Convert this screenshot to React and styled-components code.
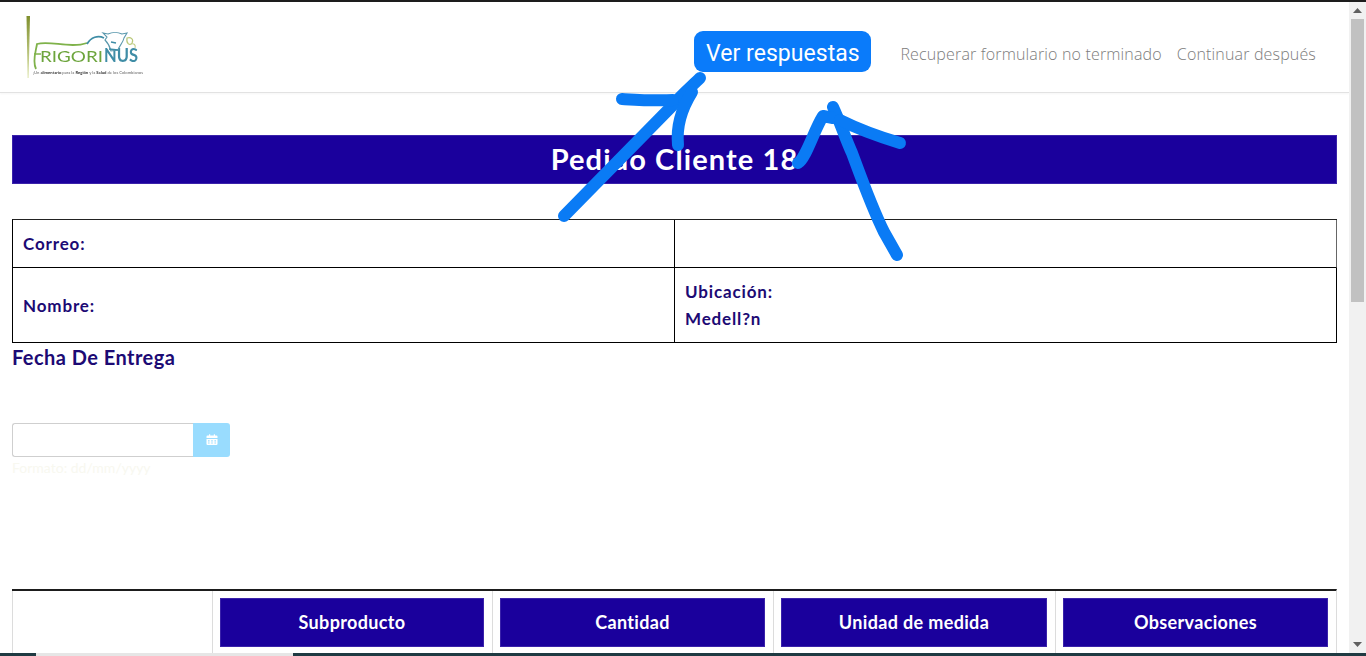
import React from "react";
import styled, { createGlobalStyle } from "styled-components";

const Global = createGlobalStyle`
  html, body { margin: 0; padding: 0; height: 100%; overflow: hidden; background: #fff; }
  * { box-sizing: border-box; }
`;

const Frame = styled.div`
  position: relative;
  width: 1366px;
  height: 656px;
  display: flex;
  flex-direction: column;
  overflow: hidden;
  background: #fff;
  font-family: "Lato", "Open Sans", sans-serif;
`;
const TopEdge = styled.div`
  height: 2px;
  flex: none;
  background: #1d1d1d;
`;
const Middle = styled.div`
  flex: 1;
  min-height: 0;
  display: flex;
`;
const Page = styled.main`
  flex: 1;
  min-width: 0;
  overflow: hidden;
`;
const Header = styled.header`
  height: 91px;
  display: flex;
  align-items: center;
  padding: 0 33px 0 26px;
  border-bottom: 1px solid #e2e2e2;
  box-shadow: 0 1px 2px rgba(0, 0, 0, 0.04);
`;
const LogoBox = styled.div`
  width: 120px;
  height: 64px;
  margin-top: 2px;
`;
const Nav = styled.nav`
  margin-left: auto;
  margin-top: 8px;
  display: flex;
  align-items: center;
  gap: 15px;
`;
const PrimaryLink = styled.a`
  display: flex;
  align-items: center;
  justify-content: center;
  width: 177px;
  height: 41px;
  padding-top: 4px;
  margin-right: 14px;
  background: #0a7bfa;
  border-radius: 9px;
  color: #fff;
  font: 400 23px/1 "Roboto", sans-serif;
  letter-spacing: 0.05px;
`;
const NavLink = styled.a`
  padding-top: 6px;
  color: #7c7c7c;
  font: 300 16px/1 "Open Sans", sans-serif;
  letter-spacing: 0.16px;
`;
const Content = styled.div`
  padding: 42px 12px 0;
`;
const TitleBar = styled.h1`
  margin: 0;
  height: 49px;
  padding-bottom: 2px;
  display: flex;
  align-items: center;
  justify-content: center;
  background: #1a009c;
  border: 1px solid #3a22aa;
  color: #fff;
  font-size: 29px;
  font-weight: 700;
  letter-spacing: 1.1px;
`;
const InfoTable = styled.div`
  margin-top: 35px;
  display: grid;
  grid-template-columns: 1fr 1fr;
  grid-template-rows: 48px 75px;
  border-top: 1px solid #222;
  border-left: 1px solid #000;
`;
const InfoCell = styled.div`
  display: flex;
  flex-direction: column;
  justify-content: center;
  padding: 0 10px;
  border-right: 1px solid ${(p) => (p.$muted ? "#666" : "#000")};
  border-bottom: 1px solid #000;
  color: #1c0a74;
  font-size: 17px;
  font-weight: 700;
  line-height: 27px;
  letter-spacing: 0.85px;
`;
const SectionLabel = styled.h2`
  margin: 0 0 52px;
  height: 28px;
  display: flex;
  align-items: center;
  color: #1c0a74;
  font-size: 20px;
  font-weight: 700;
  letter-spacing: 0.45px;
`;
const DateGroup = styled.div`
  width: 218px;
  height: 34px;
  display: flex;
`;
const DateInput = styled.input`
  flex: 1;
  min-width: 0;
  border: 1px solid #cfcfcf;
  border-right: none;
  border-radius: 3px 0 0 3px;
  background: #fff;
`;
const DateAddon = styled.div`
  width: 37px;
  display: flex;
  align-items: center;
  justify-content: center;
  background: #99dcfe;
  border-radius: 0 3px 3px 0;
`;
const Hint = styled.div`
  height: 18px;
  margin-top: 2px;
  color: #f8f8f0;
  font-size: 14px;
  line-height: 18px;
`;
const ProductGrid = styled.div`
  margin-top: 112px;
  display: grid;
  grid-template-columns: 200px 280px 281px 282px 281px;
  border-top: 2px solid #1d1d1d;
  border-right: 1px solid #dcdcdc;
`;
const GridCell = styled.div`
  height: 64px;
  padding: 7px 8px 0 7px;
  border-left: 1px solid #dcdcdc;
`;
const ColumnHead = styled.div`
  height: 49px;
  padding-bottom: 1px;
  display: flex;
  align-items: center;
  justify-content: center;
  background: #1a009c;
  border: 1px solid #3a22aa;
  color: #fff;
  font-size: 18px;
  font-weight: 700;
  letter-spacing: 0.35px;
`;
const Scrollbar = styled.div`
  width: 17px;
  flex: none;
  display: flex;
  flex-direction: column;
  background: #f1f1f1;
`;
const ScrollButton = styled.div`
  height: 17px;
  flex: none;
  display: flex;
  align-items: center;
  justify-content: center;
  color: #606060;
`;
const ScrollTrack = styled.div`
  flex: 1;
  padding: 0 2px;
`;
const ScrollThumb = styled.div`
  height: 283px;
  background: #c1c1c1;
`;
const BottomStrip = styled.div`
  height: 3px;
  flex: none;
  display: flex;
  background: #1f3a42;
`;
const StripGap = styled.div`
  width: ${(p) => p.$w}px;
  background: ${(p) => (p.$light ? "#e6e6e6" : "transparent")};
`;
const Overlay = styled.svg`
  position: absolute;
  left: 0;
  top: 0;
  pointer-events: none;
`;

const Logo = () => (
  <svg width="120" height="64" viewBox="0 0 120 64" style={{ filter: "blur(0.4px)" }}>
    <defs>
      <linearGradient id="leaf" x1="0" y1="0" x2="0" y2="1">
        <stop offset="0" stopColor="#7f8f2c" />
        <stop offset="1" stopColor="#dfe6b0" />
      </linearGradient>
    </defs>
    <path d="M0.5 0 L4 0 L2.6 62 L1.6 62 Z" fill="url(#leaf)" />
    <path d="M10 53 C6 45 10 35 11 28 C24 24 44 33 61 27" fill="none" stroke="#7fb24a" strokeWidth="1.8" />
    <path d="M8 38 L15 38" stroke="#7fb24a" strokeWidth="1.5" />
    <text x="14" y="46" fontFamily="Lato, sans-serif" fontSize="16" fill="#6da53d" textLength="63" lengthAdjust="spacingAndGlyphs">RIGORI</text>
    <text x="78" y="46" fontFamily="Lato, sans-serif" fontSize="18" fontWeight="700" fill="#3f8da6" textLength="34" lengthAdjust="spacingAndGlyphs">NUS</text>
    <path d="M61 28 C65 21 72 19 78 22" fill="none" stroke="#3f8da6" strokeWidth="1.8" />
    <path
      d="M77 17 L82 18 C86 16 92 16 96 18 L101 17 L98 22 C97 27 93 30 92 34 L85 35 C84 31 82 27 79 24 L81 21 Z"
      fill="#fff"
      stroke="#5a98ad"
      strokeWidth="1.1"
    />
    <path d="M85 26 L90 27 M83 33 L92 34" stroke="#3f8da6" strokeWidth="1.4" />
    <path d="M101 22 C105 21 108 23 106 27 C104 30 100 28 101 22 Z" fill="none" stroke="#b9c878" strokeWidth="1.2" />
    <path d="M105 28 C108 27 110 29 109 32" fill="none" stroke="#c4cf8c" strokeWidth="1.1" />
    <text x="7" y="58" fontFamily="Lato, sans-serif" fontSize="4.2" fill="#666" textLength="110">
      ¡Un <tspan fontWeight="700" fill="#333">alimentario</tspan> para la <tspan fontWeight="700" fill="#333">Región</tspan> y la <tspan fontWeight="700" fill="#333">Salud</tspan> de los Colombianos
    </text>
  </svg>
);

const Arrows = () => (
  <Overlay width="1366" height="656" viewBox="0 0 1366 656">
    <g fill="none" stroke="#0a7bf5" strokeWidth="12" strokeLinecap="round" strokeLinejoin="round">
      <path d="M564 216 L673 105 C682 94 692 86 700 78" />
      <path d="M622 99 C640 100 656 101 673 100" />
      <path d="M692 92 C682 108 676 125 678 145" />
      <path d="M833 107 C840 122 846 140 852 153 C862 180 872 208 884 232 L897 255" />
      <path d="M798 163 C806 158 814 130 823 116 L833 118" />
      <path d="M840 120 C860 130 880 137 900 143" />
    </g>
  </Overlay>
);

const CalendarIcon = () => (
  <svg width="12" height="12" viewBox="0 0 12 12">
    <path d="M1.5 1.5h9a1 1 0 0 1 1 1V4H.5V2.5a1 1 0 0 1 1-1Z" fill="#fff" />
    <rect x="3" y="0.3" width="1.2" height="2" fill="#fff" />
    <rect x="7.8" y="0.3" width="1.2" height="2" fill="#fff" />
    <path d="M.5 5h11v5a1 1 0 0 1-1 1h-9a1 1 0 0 1-1-1Zm1.5 1.2v1.2h1.6V6.2Zm3.2 0v1.2h1.6V6.2Zm3.2 0v1.2H10V6.2ZM2 8.4v1.2h1.6V8.4Zm3.2 0v1.2h1.6V8.4Zm3.2 0v1.2H10V8.4Z" fill="#fff" fillRule="evenodd" />
  </svg>
);

const Tri = ({ down }) => (
  <svg width="9" height="5" viewBox="0 0 9 5">
    <path d={down ? "M0 0h9L4.5 5Z" : "M0 5h9L4.5 0Z"} fill="currentColor" />
  </svg>
);

const columns = ["Subproducto", "Cantidad", "Unidad de medida", "Observaciones"];

export default function App() {
  return (
    <Frame>
      <Global />
      <TopEdge />
      <Middle>
        <Page>
          <Header>
            <LogoBox>
              <Logo />
            </LogoBox>
            <Nav>
              <PrimaryLink>Ver respuestas</PrimaryLink>
              <NavLink>Recuperar formulario no terminado</NavLink>
              <NavLink>Continuar después</NavLink>
            </Nav>
          </Header>
          <Content>
            <TitleBar>Pedido Cliente 18</TitleBar>
            <InfoTable>
              <InfoCell>Correo:</InfoCell>
              <InfoCell $muted />
              <InfoCell>Nombre:</InfoCell>
              <InfoCell>
                <span>Ubicación:</span>
                <span>Medell?n</span>
              </InfoCell>
            </InfoTable>
            <SectionLabel>Fecha De Entrega</SectionLabel>
            <DateGroup>
              <DateInput />
              <DateAddon>
                <CalendarIcon />
              </DateAddon>
            </DateGroup>
            <Hint>Formato: dd/mm/yyyy</Hint>
            <ProductGrid>
              <GridCell />
              {columns.map((c) => (
                <GridCell key={c}>
                  <ColumnHead>{c}</ColumnHead>
                </GridCell>
              ))}
            </ProductGrid>
          </Content>
        </Page>
        <Scrollbar>
          <ScrollButton>
            <Tri />
          </ScrollButton>
          <ScrollTrack>
            <ScrollThumb />
          </ScrollTrack>
          <ScrollButton>
            <Tri down />
          </ScrollButton>
        </Scrollbar>
      </Middle>
      <BottomStrip>
        <StripGap $w={36} />
        <StripGap $w={257} $light />
      </BottomStrip>
      <Arrows />
    </Frame>
  );
}
